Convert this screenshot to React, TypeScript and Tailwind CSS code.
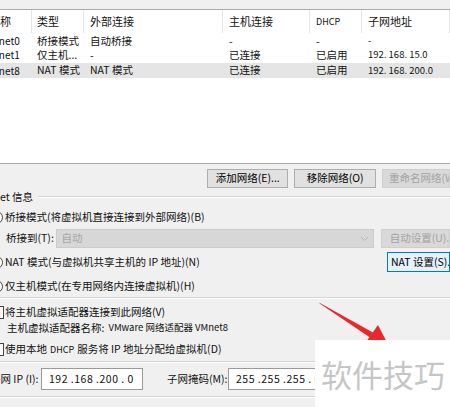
import React from 'react';

const font = { fontFamily: '"Noto Sans CJK SC", "Noto Sans", sans-serif' };

const cols = [
  { w: 'w-[32px]', pad: '' },
  { w: 'w-[52px]', pad: 'pl-[5px]' },
  { w: 'w-[139px]', pad: 'pl-[6px]' },
  { w: 'w-[87px]', pad: 'pl-[6px]' },
  { w: 'w-[52px]', pad: 'pl-[6px]' },
  { w: 'flex-1', pad: 'pl-[6px]' },
];

const rows = [
  { name: 'VMnet0', cells: ['桥接模式', '自动桥接', '-', '-', '-'], sel: false },
  { name: 'VMnet1', cells: ['仅主机...', '-', '已连接', '已启用', '192. 168. 15.0'], sel: false },
  { name: 'VMnet8', cells: ['NAT 模式', 'NAT 模式', '已连接', '已启用', '192. 168. 200.0'], sel: true },
];

function Btn({ children, disabled, focus, className = '' }: { children: React.ReactNode; disabled?: boolean; focus?: boolean; className?: string }) {
  const tone = disabled
    ? 'bg-[#d9d9d9] border-[#cfcfcf] text-[#a3a3a3]'
    : focus
    ? 'bg-[#e5f1fb] border-[#0078d7] text-black'
    : 'bg-[#e1e1e1] border-[#adadad] text-black';
  return (
    <div className={`h-full border flex items-center justify-center whitespace-nowrap overflow-hidden ${tone} ${className}`}>
      {children}
    </div>
  );
}

function Radio({ on }: { on?: boolean }) {
  return (
    <span className="w-[13px] h-[13px] -ml-[13px] mr-[2px] rounded-full border border-[#444] bg-white flex items-center justify-center shrink-0">
      {on && <span className="w-[5px] h-[5px] rounded-full bg-[#222]" />}
    </span>
  );
}

function Check() {
  return <span className="w-[13px] h-[13px] -ml-[12px] mr-[1px] border border-[#444] bg-white shrink-0" />;
}

function Sep() {
  return <div className="h-[2px] border-t border-[#d5d5d5] border-b border-b-white" />;
}

export default function App() {
  return (
    <div style={font} className="relative w-[450px] h-[407px] overflow-hidden bg-[#f0f0f0] text-[10.5px] text-[#111] leading-none">
      <div className="h-[9px]" />

      {/* network list */}
      <div className="h-[155px] bg-white border-y border-[#a9a9a9]">
        <div className="flex h-[23px]">
          {['名称', '类型', '外部连接', '主机连接', 'DHCP', '子网地址'].map((h, i) => (
            <div key={h} className={`${cols[i].w} ${cols[i].pad} h-full flex items-center border-r border-[#e5e5e5] overflow-hidden whitespace-nowrap ${h === 'DHCP' ? 'text-[9px]' : 'text-[11px]'}`}>
              <span className={i === 0 ? '-ml-[11px]' : ''}>{h}</span>
            </div>
          ))}
        </div>
        {rows.map((r, ri) => (
          <div key={r.name} className={`flex h-[14px] ${ri === 0 ? 'mt-[1px]' : ''} ${r.sel ? 'bg-[#e5e5e5] mt-[1px] h-[15px]' : ''}`}>
            <div className={`${cols[0].w} flex items-center overflow-hidden whitespace-nowrap text-[10px]`}>
              <span className="-ml-[15px]">{r.name}</span>
            </div>
            {r.cells.map((c, i) => (
              <div key={i} className={`${cols[i + 1].w} ${cols[i + 1].pad} flex items-center overflow-hidden whitespace-nowrap ${i === 4 ? 'text-[9.5px]' : ''}`}>
                {c}
              </div>
            ))}
          </div>
        ))}
      </div>

      {/* buttons */}
      <div className="flex h-[19px] mt-[5px] pl-[207px] gap-[6px]">
        <Btn className="w-[84px]">添加网络(E)...</Btn>
        <Btn className="w-[84px]">移除网络(O)</Btn>
        <Btn disabled className="w-[70px] justify-start pl-[6px]">重命名网络(W)...</Btn>
      </div>

      {/* VMnet info */}
      <div className="flex items-center h-[14px] mt-[2px]">
        <span className="-ml-[21px] whitespace-nowrap">VMnet 信息</span>
        <div className="flex-1 ml-[5px] h-[2px] border-t border-[#d5d5d5] border-b border-b-white" />
      </div>

      <div className="flex items-center h-[16px] mt-[5px] pl-[3px] whitespace-nowrap">
        <Radio />
        桥接模式(将虚拟机直接连接到外部网络)(B)
      </div>

      <div className="flex items-center h-[19px] mt-[4px] pl-[6px] whitespace-nowrap">
        <span className="w-[51px]">桥接到(T):</span>
        <div className="w-[321px] h-full bg-[#d7d7d7] border border-[#cccccc] flex items-center pl-[4px] text-[#a6a6a6]">
          <span className="flex-1">自动</span>
          <svg width="9" height="6" viewBox="0 0 9 6" className="mr-[4px]">
            <path d="M1 1 L4.5 4.5 L8 1" fill="none" stroke="#b5b5b5" strokeWidth="1" />
          </svg>
        </div>
        <Btn disabled className="ml-[7px] w-[70px] justify-start pl-[8px]">自动设置(U)...</Btn>
      </div>

      <div className="flex items-center h-[20px] mt-[4px] pl-[3px] whitespace-nowrap">
        <Radio on />
        <span className="flex-1">NAT 模式(与虚拟机共享主机的 IP 地址)(N)</span>
        <Btn focus className="w-[63px] justify-start pl-[3px]">NAT 设置(S)...</Btn>
      </div>

      <div className="flex items-center h-[16px] mt-[6px] pl-[3px] whitespace-nowrap">
        <Radio />
        仅主机模式(在专用网络内连接虚拟机)(H)
      </div>

      <div className="mt-[3px]">
        <Sep />
      </div>

      <div className="flex items-center h-[16px] mt-[5px] pl-[3px] whitespace-nowrap">
        <Check />
        将主机虚拟适配器连接到此网络(V)
      </div>

      <div className="flex items-center h-[14px] mt-[1px] pl-[7px] whitespace-nowrap">
        主机虚拟适配器名称:<span className="ml-[4px] text-[9.5px]">VMware 网络适配器 VMnet8</span>
      </div>

      <div className="flex items-center h-[16px] mt-[6px] pl-[3px] whitespace-nowrap">
        <Check />
        使用本地 <span className="text-[9px] mx-[3px]">DHCP</span> 服务将 IP 地址分配给虚拟机(D)
      </div>

      <div className="mt-[4px]">
        <Sep />
      </div>

      <div className="flex items-center h-[22px] mt-[5px] whitespace-nowrap">
        <span className="-ml-[10px] w-[51px]">子网 IP (I):</span>
        <div className="w-[102px] h-full bg-white border border-[#9a9a9a] flex items-center pl-[7px] tracking-[0.5px]">192 .168 .200 . 0</div>
        <span className="ml-[24px] w-[61px]">子网掩码(M):</span>
        <div className="w-[102px] h-full bg-white border border-[#9a9a9a] flex items-center pl-[7px] tracking-[0.5px]">255 .255 .255 . 0</div>
      </div>

      <div className="mt-[6px]">
        <Sep />
      </div>

      {/* annotation arrow */}
      <svg className="absolute left-0 top-0 pointer-events-none" width="450" height="407" viewBox="0 0 450 407">
        <polygon points="319,302.5 320,303.8 370,337.5 373,332.5" fill="#e8282a" />
        <polygon points="366,342 378,325 392,352" fill="#e8282a" />
      </svg>

      {/* watermark */}
      <div className="absolute left-[315px] top-[340px] w-[135px] h-[67px] bg-white flex items-center pl-[6px]">
        <span className="text-[31px] text-[#c6c6c6] whitespace-nowrap">软件技巧</span>
      </div>
    </div>
  );
}
